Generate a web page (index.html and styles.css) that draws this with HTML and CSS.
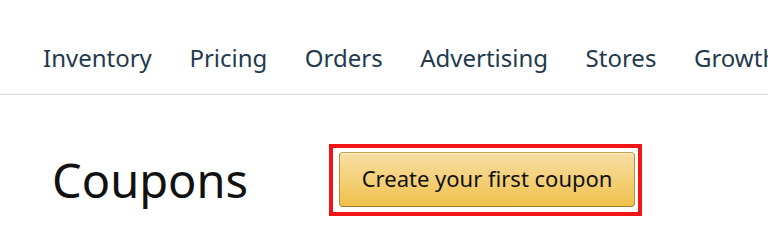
FILE: index.html
```html
<html>
  <head>
    <meta charset="utf-8">
    <link rel="stylesheet" href="styles.css">
  </head>
  <body>
    <nav class="topnav">
      <a class="topnav-item">Inventory</a>
      <a class="topnav-item">Pricing</a>
      <a class="topnav-item">Orders</a>
      <a class="topnav-item">Advertising</a>
      <a class="topnav-item">Stores</a>
      <a class="topnav-item">Growth</a>
    </nav>
    <section class="header">
      <h1 class="title">Coupons</h1>
      <div class="highlight">
        <button class="create-btn">Create your first coupon</button>
      </div>
    </section>
  </body>
</html>
```

FILE: styles.css
```css
body {
  margin: 0;
  font-family: "Noto Sans", sans-serif;
  background: #fff;
  overflow: hidden;
}

.topnav {
  display: flex;
  gap: 37.5px;
  padding: 40px 0 0 43px;
  height: 54px;
  border-bottom: 1px solid #d8d8d8;
  white-space: nowrap;
}

.topnav-item {
  font-size: 24px;
  color: #233a4e;
  line-height: 36px;
}

.header {
  display: flex;
  align-items: center;
  padding: 49px 0 0 52px;
}

.title {
  margin: 0;
  font-size: 47px;
  font-weight: 400;
  color: #111;
  line-height: 56px;
}

.highlight {
  margin-left: 81px;
  border: 4px solid #f01616;
  padding: 4px 3px 5px 6px;
}

.create-btn {
  font-family: inherit;
  font-size: 22px;
  color: #111;
  padding: 0 20px 4px;
  height: 55px;
  width: 296px;
  border: 1px solid #a88734;
  border-color: #c5a44f #b39038 #9c7e31;
  border-radius: 4px;
  background: linear-gradient(to bottom, #f7dfa5, #f0c14b);
  box-shadow: inset 0 1px 0 rgba(255, 255, 255, .4);
}
```
